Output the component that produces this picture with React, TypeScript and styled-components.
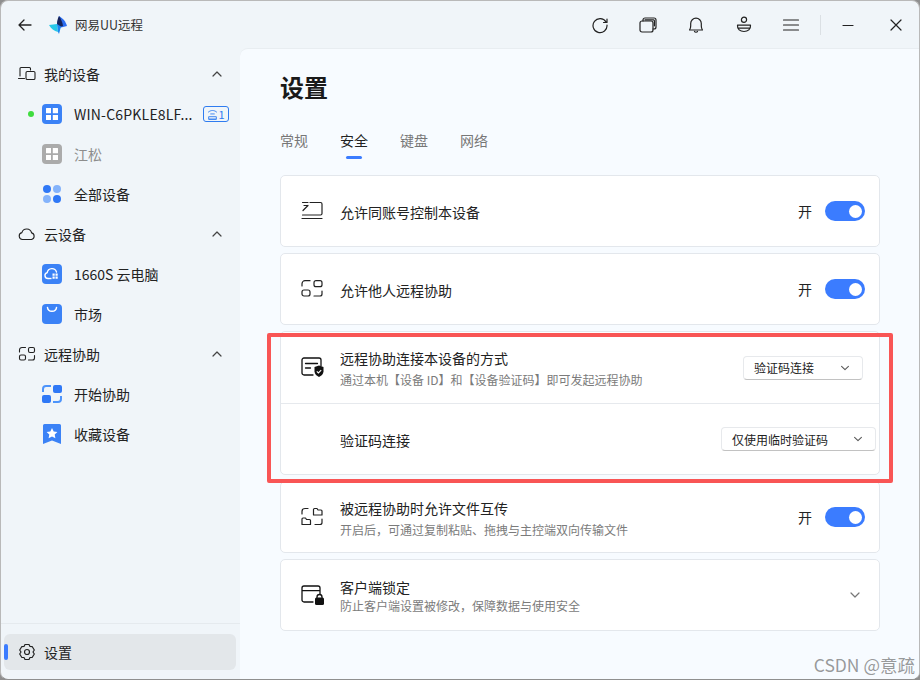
import React from 'react'
import styled, { createGlobalStyle } from 'styled-components'

const GlobalStyle = createGlobalStyle`
  html, body {
    margin: 0;
    padding: 0;
    width: 920px;
    height: 680px;
    overflow: hidden;
    background: #8f8f8f;
    font-family: "Noto Sans CJK SC", "Liberation Sans", sans-serif;
  }
  * { box-sizing: border-box; }
`

const Window = styled.div`
  position: relative;
  width: 920px;
  height: 680px;
  display: flex;
  flex-direction: column;
  background: #f0f5f9;
  border-radius: 8px;
  border: 1px solid #b9b9b9;
  border-bottom-color: #8f8f8f;
  overflow: hidden;
`
const TitleBar = styled.header`
  height: 47px;
  flex: none;
  display: flex;
  align-items: center;
  padding-left: 17px;
  color: #222;
`
const Brand = styled.span`
  margin-left: 8px;
  font-size: 12.5px;
  color: #333;
`
const LogoWrap = styled.span`
  margin-left: 17px;
  display: flex;
`
const ToolGroup = styled.div`
  margin-left: auto;
  display: flex;
  align-items: center;
`
const ToolButton = styled.span<{ $w?: number }>`
  width: ${(p) => p.$w ?? 48}px;
  height: 30px;
  display: flex;
  align-items: center;
  justify-content: center;
`
const ToolDivider = styled.span`
  width: 1px;
  height: 20px;
  margin: 0 2px 0 6px;
  background: #dbe0e4;
`
const Body = styled.div`
  flex: 1;
  display: flex;
  min-height: 0;
`
const Sidebar = styled.nav`
  width: 239px;
  flex: none;
  display: flex;
  flex-direction: column;
  padding-top: 6px;
`
const NavRow = styled.div`
  height: 40px;
  flex: none;
  display: flex;
  align-items: center;
  padding-left: 17px;
  font-size: 14px;
  color: #222;
`
const NavLabel = styled.span`
  margin-left: 8px;
  flex: 1;
`
const NavToggle = styled.span`
  width: 14px;
  margin-right: 16px;
  display: flex;
`
const ItemRow = styled.div<{ $muted?: boolean }>`
  height: 40px;
  flex: none;
  display: flex;
  align-items: center;
  padding-left: 41px;
  font-size: 14px;
  color: ${(p) => (p.$muted ? '#8d8d8d' : '#222')};
`
const ItemLabel = styled.span<{ $wide?: boolean }>`
  margin-left: 12px;
  letter-spacing: ${(p) => (p.$wide ? '0.2px' : '0')};
`
const OnlineDot = styled.span`
  position: absolute;
  left: 27px;
  width: 6px;
  height: 6px;
  border-radius: 50%;
  background: #3fdc3f;
`
const DeviceBadge = styled.span`
  margin-left: 10px;
  width: 26px;
  height: 16px;
  border: 1px solid #2f7cf0;
  border-radius: 3px;
  display: flex;
  align-items: center;
  justify-content: center;
  gap: 1px;
  font-size: 11px;
  line-height: 1;
  color: #2f7cf0;
`
const ItemWrap = styled.div`
  position: relative;
  display: flex;
  align-items: center;
`
const SideFooter = styled.div`
  margin-top: auto;
  border-top: 1px solid #e5eaee;
  padding: 10px 3px 9px;
`
const SettingsRow = styled.div`
  position: relative;
  height: 36px;
  display: flex;
  align-items: center;
  padding-left: 14px;
  border-radius: 6px;
  background: #e3e7ea;
  font-size: 14px;
  color: #222;
  width: 232px;
`
const ActiveMark = styled.span`
  position: absolute;
  left: 0;
  top: 10px;
  width: 4px;
  height: 16px;
  border-radius: 2px;
  background: #3b7cff;
`
const Main = styled.main`
  flex: 1;
  background: #f7fbff;
  border-top: 1px solid #e8edf1;
  border-top-left-radius: 8px;
  padding: 0 39px 0 40px;
  display: flex;
  flex-direction: column;
`
const Heading = styled.h1`
  margin: 20px 0 0;
  font-size: 24px;
  line-height: 36px;
  font-weight: 700;
  color: #1a1a1a;
`
const Tabs = styled.div`
  margin-top: 23px;
  display: flex;
  gap: 32px;
`
const Tab = styled.span<{ $active?: boolean }>`
  position: relative;
  font-size: 14px;
  line-height: 24px;
  color: ${(p) => (p.$active ? '#222' : '#777')};
  ${(p) =>
    p.$active &&
    `&::after {
      content: '';
      position: absolute;
      left: 6px;
      bottom: -7px;
      width: 16px;
      height: 3px;
      border-radius: 2px;
      background: #3b7cff;
    }`}
`
const CardList = styled.div`
  margin-top: 23px;
  display: flex;
  flex-direction: column;
  gap: 6px;
`
const Card = styled.section`
  background: #fff;
  border: 1px solid #e3e7ec;
  border-radius: 5px;
`
const Row = styled.div<{ $pr?: number; $divided?: boolean }>`
  height: ${(p) => (p.$divided ? 72 : 70)}px;
  display: flex;
  align-items: center;
  padding: 0 ${(p) => p.$pr ?? 14}px 0 19px;
  ${(p) => p.$divided && 'border-bottom: 1px solid #e6e9ed;'}
`
const RowIcon = styled.span`
  width: 24px;
  height: 24px;
  flex: none;
  display: flex;
  align-items: center;
  justify-content: center;
`
const RowText = styled.div<{ $indent?: boolean; $gap?: number }>`
  margin-left: ${(p) => (p.$indent ? 40 : 16)}px;
  padding-top: 2px;
  flex: 1;
  min-width: 0;
  display: flex;
  flex-direction: column;
  gap: ${(p) => p.$gap ?? 2}px;
`
const RowTitle = styled.div`
  font-size: 14px;
  line-height: 20px;
  color: #222;
`
const RowSub = styled.div`
  font-size: 12px;
  line-height: 18px;
  color: #7b7b7b;
`
const SwitchLabel = styled.span`
  font-size: 14px;
  color: #222;
  margin-right: 13px;
`
const Switch = styled.span`
  width: 40px;
  height: 20px;
  border-radius: 10px;
  background: #3b7cff;
  display: flex;
  align-items: center;
  justify-content: flex-end;
  padding-right: 3px;
  &::after {
    content: '';
    width: 13px;
    height: 13px;
    border-radius: 50%;
    background: #fff;
  }
`
const Select = styled.div<{ $w: number }>`
  width: ${(p) => p.$w}px;
  height: 24px;
  display: flex;
  align-items: center;
  justify-content: space-between;
  padding: 0 11px 0 10px;
  background: #fff;
  border: 1px solid #e7e9ec;
  border-bottom-color: #c2c2c2;
  border-radius: 4px;
  font-size: 12px;
  color: #222;
`
const ExpandMark = styled.span`
  margin-right: 3px;
  display: flex;
`
const RedFrame = styled.div`
  position: absolute;
  left: 266px;
  top: 332px;
  width: 626px;
  height: 150px;
  border: 4px solid #f95555;
  border-radius: 2px;
  pointer-events: none;
`
const Watermark = styled.div`
  position: absolute;
  right: 4px;
  bottom: 3px;
  font-size: 17.5px;
  line-height: 22px;
  color: rgba(110, 110, 110, 0.7);
`

const Chevron = ({ up, size = 14, color = '#444' }: { up?: boolean; size?: number; color?: string }) => (
  <svg width={size} height={size} viewBox="0 0 14 14" fill="none" stroke={color} strokeWidth="1.2" strokeLinecap="round" strokeLinejoin="round">
    <path d={up ? 'M3 9l4-4 4 4' : 'M3 5l4 4 4-4'} />
  </svg>
)

const Line = ({ size = 24, vb = 24, sw = 1.3, color = '#222', children }: { size?: number; vb?: number; sw?: number; color?: string; children: React.ReactNode }) => (
  <svg width={size} height={size} viewBox={`0 0 ${vb} ${vb}`} fill="none" stroke={color} strokeWidth={sw} strokeLinecap="round" strokeLinejoin="round">
    {children}
  </svg>
)

const Logo = () => (
  <svg width="18" height="18" viewBox="0 0 18 18">
    <path d="M0 9L8 8 9 16C5 15 2 12.500 0 9Z" fill="#27c8e8" />
    <path d="M10 0C14 2.500 16.500 5 18 10L10 12 8 8Z" fill="#2b6cf0" />
    <path d="M8 8L12 10.500 10 18 9 16Z" fill="#1a86f0" />
    <path d="M10 0C8.500 3 8 5.500 8 8L12 10.500 14 10C13.500 6 12 3 10 0Z" fill="#16235a" />
  </svg>
)

const SquareIcon = ({ color = '#3b82f6', children }: { color?: string; children: React.ReactNode }) => (
  <svg width="20" height="20" viewBox="0 0 20 20">
    <rect width="20" height="20" rx="4" fill={color} />
    {children}
  </svg>
)

const WinPanes = () => (
  <path d="M4 4.500a.5.5 0 0 1 .5-.5H9v5.200H4zM10.800 4h4.700a.5.5 0 0 1 .5.500v4.700h-5.200zM4 11h5v5H4.500a.5.5 0 0 1-.5-.5zM10.800 11H16v4.500a.5.5 0 0 1-.5.500h-4.700z" fill="#fff" />
)

const App = () => (
  <>
    <GlobalStyle />
    <Window>
      <TitleBar>
        <Line size={14} vb={14} sw={1.3}>
          <path d="M13 7H1M6 2L1 7l5 5" />
        </Line>
        <LogoWrap>
          <Logo />
        </LogoWrap>
        <Brand>网易UU远程</Brand>
        <ToolGroup>
          <ToolButton>
            <Line size={18} vb={18} sw={1.2}>
              <path d="M15 6A7 7 0 1 0 16 9M16 3v3.500h-3.500" />
            </Line>
          </ToolButton>
          <ToolButton>
            <Line size={18} vb={18} sw={1.2}>
              <rect x="1" y="5" width="13" height="11" rx="2" />
              <path d="M4 5V4a2 2 0 0 1 2-2h9a2 2 0 0 1 2 2v7a2 2 0 0 1-2 2h-1M6 3.800h8.500a1 1 0 0 1 .9 1v5" />
            </Line>
          </ToolButton>
          <ToolButton>
            <Line size={18} vb={18} sw={1.2}>
              <path d="M2.500 14h13c-.8-1-1.200-2-1.200-4V7.500a5.300 5.300 0 0 0-10.600 0V10c0 2-.4 3-1.200 4zM7.500 15.500c.5 1 2.500 1 3 0" />
            </Line>
          </ToolButton>
          <ToolButton>
            <Line size={18} vb={18} sw={1.2}>
              <circle cx="9" cy="3.800" r="2.600" />
              <path d="M2.500 9.200h13c.3 4-2.500 6.300-6.500 6.300S2.200 13.200 2.500 9.200zM3 12.200h12" />
            </Line>
          </ToolButton>
          <ToolButton $w={46}>
            <Line size={18} vb={18} sw={1.2}>
              <path d="M1.500 4h15M1.500 9h15M1.500 14h15" />
            </Line>
          </ToolButton>
          <ToolDivider />
          <ToolButton $w={50}>
            <Line size={12} vb={12} sw={1.2}>
              <path d="M1 6.500h10" />
            </Line>
          </ToolButton>
          <ToolButton $w={46}>
            <Line size={12} vb={12} sw={1.2}>
              <path d="M1 1l10 10M11 1L1 11" />
            </Line>
          </ToolButton>
        </ToolGroup>
      </TitleBar>
      <Body>
        <Sidebar>
          <NavRow>
            <Line size={18} vb={18} sw={1.1}>
              <path d="M2 11V3.500a1 1 0 0 1 1-1h8.500a1 1 0 0 1 1 1V5M.5 13.500h6" />
              <rect x="8" y="6.500" width="9" height="8" rx="1.300" />
            </Line>
            <NavLabel>我的设备</NavLabel>
            <NavToggle>
              <Chevron up />
            </NavToggle>
          </NavRow>
          <ItemWrap>
            <OnlineDot />
            <ItemRow>
              <SquareIcon color="#3b82f6">
                <WinPanes />
              </SquareIcon>
              <ItemLabel $wide>WIN-C6PKLE8LF...</ItemLabel>
              <DeviceBadge>
                <svg width="11" height="11" viewBox="0 0 10 10" fill="none" stroke="#2f7cf0" strokeWidth="0.800">
                  <path d="M1 3C3.500.8 6.500.8 9 3M3 4.500h4M1.500 9.300V7h7v2.300zM1.500 9.300h7" />
                </svg>
                1
              </DeviceBadge>
            </ItemRow>
          </ItemWrap>
          <ItemRow $muted>
            <SquareIcon color="#ababab">
              <WinPanes />
            </SquareIcon>
            <ItemLabel>江松</ItemLabel>
          </ItemRow>
          <ItemRow>
            <svg width="20" height="20" viewBox="0 0 20 20">
              <circle cx="5" cy="5" r="4" fill="#2f78f6" />
              <circle cx="15" cy="5" r="4" fill="#84b3fb" />
              <circle cx="5" cy="15" r="4" fill="#84b3fb" />
              <circle cx="15" cy="15" r="4" fill="#2f78f6" />
            </svg>
            <ItemLabel>全部设备</ItemLabel>
          </ItemRow>
          <NavRow>
            <Line size={18} vb={18} sw={1.1}>
              <path d="M4.500 14.500a3.500 3.500 0 0 1-.6-6.900 5 5 0 0 1 9.700.3 3.400 3.400 0 0 1-.1 6.600z" />
            </Line>
            <NavLabel>云设备</NavLabel>
            <NavToggle>
              <Chevron up />
            </NavToggle>
          </NavRow>
          <ItemRow>
            <SquareIcon color="#3b82f6">
              <path d="M6 14.500a3 3 0 0 1-.8-5.900 4.800 4.800 0 0 1 9.300-.6" fill="none" stroke="#fff" strokeWidth="1.400" strokeLinecap="round" />
              <path d="M6 14.500h3.500" fill="none" stroke="#fff" strokeWidth="1.400" />
              <path d="M10.500 9.500h2.200v2.200h-2.200zM13.500 9.500h2.200v2.200h-2.200zM10.500 12.500h2.200v2.200h-2.200zM13.500 12.500h2.200v2.200h-2.200z" fill="#fff" />
            </SquareIcon>
            <ItemLabel>1660S 云电脑</ItemLabel>
          </ItemRow>
          <ItemRow>
            <SquareIcon color="#3b82f6">
              <path d="M5.500 3.500c.5 5 8.500 5 9 0" fill="none" stroke="#fff" strokeWidth="1.500" strokeLinecap="round" />
            </SquareIcon>
            <ItemLabel>市场</ItemLabel>
          </ItemRow>
          <NavRow>
            <Line size={18} vb={18} sw={1.1}>
              <rect x="1.500" y="10" width="6" height="5" rx="1.500" />
              <rect x="10.500" y="2.500" width="6" height="5" rx="1.500" />
              <path d="M7.500 2.500H4a2.500 2.500 0 0 0-2.500 2.500v2M10.500 15h4a2 2 0 0 0 2-2v-2.500" />
            </Line>
            <NavLabel>远程协助</NavLabel>
            <NavToggle>
              <Chevron up />
            </NavToggle>
          </NavRow>
          <ItemRow>
            <svg width="20" height="20" viewBox="0 0 20 20" fill="none">
              <rect x="11" y="1" width="9" height="8" rx="2" fill="#2f78f6" />
              <rect x="0" y="11" width="9" height="8" rx="2" fill="#2f78f6" />
              <path d="M9 2H4a3 3 0 0 0-3 3v3M11 18h5a3 3 0 0 0 3-3v-3" stroke="#4d94fb" strokeWidth="2" />
            </svg>
            <ItemLabel>开始协助</ItemLabel>
          </ItemRow>
          <ItemRow>
            <svg width="20" height="20" viewBox="0 0 20 20">
              <path d="M1 1.500A1.500 1.500 0 0 1 2.500 0h15A1.500 1.500 0 0 1 19 1.500V20l-9-3.500L1 20z" fill="#3b82f6" />
              <path d="M10 4l1.700 3.400 3.700.5-2.700 2.600.7 3.700-3.400-1.800-3.400 1.800.7-3.700-2.700-2.600 3.700-.5z" fill="#fff" />
            </svg>
            <ItemLabel>收藏设备</ItemLabel>
          </ItemRow>
          <SideFooter>
            <SettingsRow>
              <ActiveMark />
              <Line size={18} vb={18} sw={1.2}>
                <path d="M7 1.500h4l1 2 2.300.2L16.300 7 15 9l1.300 2-2 3.300-2.300.2-1 2H7l-1-2-2.300-.2L1.700 11 3 9 1.700 7l2-3.300L6 3.500z" />
                <circle cx="9" cy="9" r="2.500" />
              </Line>
              <NavLabel>设置</NavLabel>
            </SettingsRow>
          </SideFooter>
        </Sidebar>
        <Main>
          <Heading>设置</Heading>
          <Tabs>
            <Tab>常规</Tab>
            <Tab $active>安全</Tab>
            <Tab>键盘</Tab>
            <Tab>网络</Tab>
          </Tabs>
          <CardList>
            <Card>
              <Row>
                <RowIcon>
                  <Line sw={1.2}>
                    <path d="M10 3.500h10.500a1.500 1.500 0 0 1 1.500 1.500v9.500a1.500 1.500 0 0 1-1.500 1.500H2.500M2.500 3.500H8M4 6.500h4M8 6.500L3 11.500M2 19.500h20" />
                  </Line>
                </RowIcon>
                <RowText>
                  <RowTitle>允许同账号控制本设备</RowTitle>
                </RowText>
                <SwitchLabel>开</SwitchLabel>
                <Switch />
              </Row>
            </Card>
            <Card>
              <Row>
                <RowIcon>
                  <Line sw={1.2}>
                    <rect x="2" y="13" width="8" height="6" rx="2" />
                    <rect x="14" y="3.700" width="8" height="6" rx="2" />
                    <path d="M10 3.700H5a3 3 0 0 0-3 3V9M14 19h6a2 2 0 0 0 2-2v-3" />
                  </Line>
                </RowIcon>
                <RowText>
                  <RowTitle>允许他人远程协助</RowTitle>
                </RowText>
                <SwitchLabel>开</SwitchLabel>
                <Switch />
              </Row>
            </Card>
            <Card>
              <Row $divided $pr={16}>
                <RowIcon>
                  <svg width="24" height="24" viewBox="0 0 24 24" fill="none">
                    <path d="M13 19H4a2 2 0 0 1-2-2V4a2 2 0 0 1 2-2h15a2 2 0 0 1 2 2v6M5.500 7.500h12M5.500 12h5" stroke="#111" strokeWidth="1.300" strokeLinecap="round" />
                    <path d="M19 9.500l4.500 1.500v4.500c0 2.700-2.500 4.500-4.500 5.500-2-1-4.500-2.800-4.500-5.500V11z" fill="#111" />
                    <path d="M16.800 15.300l1.600 1.600 2.800-2.800" stroke="#fff" strokeWidth="1.100" />
                  </svg>
                </RowIcon>
                <RowText $gap={3}>
                  <RowTitle>远程协助连接本设备的方式</RowTitle>
                  <RowSub>通过本机【设备 ID】和【设备验证码】即可发起远程协助</RowSub>
                </RowText>
                <Select $w={120}>
                  验证码连接
                  <Chevron color="#555" size={12} />
                </Select>
              </Row>
              <Row $pr={3}>
                <RowText $indent>
                  <RowTitle>验证码连接</RowTitle>
                </RowText>
                <Select $w={155}>
                  仅使用临时验证码
                  <Chevron color="#555" size={12} />
                </Select>
              </Row>
            </Card>
            <Card>
              <Row>
                <RowIcon>
                  <Line sw={1.2}>
                    <path d="M8 3.500H5a3 3 0 0 0-3 3V9M15 19.500h5a2 2 0 0 0 2-2V14" />
                    <path d="M13.500 10V4.500a1 1 0 0 1 1-1H17l1 1.500h3a1 1 0 0 1 1 1V10zM2 19.500V14a1 1 0 0 1 1-1h2.500l1 1.500H9.500a1 1 0 0 1 1 1v4z" />
                  </Line>
                </RowIcon>
                <RowText $gap={3}>
                  <RowTitle>被远程协助时允许文件互传</RowTitle>
                  <RowSub>开启后，可通过复制粘贴、拖拽与主控端双向传输文件</RowSub>
                </RowText>
                <SwitchLabel>开</SwitchLabel>
                <Switch />
              </Row>
            </Card>
            <Card>
              <Row>
                <RowIcon>
                  <svg width="24" height="24" viewBox="0 0 24 24" fill="none">
                    <path d="M13 19H4a2 2 0 0 1-2-2V5a2 2 0 0 1 2-2h14a2 2 0 0 1 2 2v6M2 7.700h18" stroke="#111" strokeWidth="1.300" strokeLinecap="round" />
                    <rect x="15" y="14.500" width="9" height="7.500" rx="1.500" fill="#111" />
                    <path d="M17 15v-1a2.500 2.500 0 0 1 5 0v1" stroke="#111" strokeWidth="1.300" />
                  </svg>
                </RowIcon>
                <RowText $gap={0}>
                  <RowTitle>客户端锁定</RowTitle>
                  <RowSub>防止客户端设置被修改，保障数据与使用安全</RowSub>
                </RowText>
                <ExpandMark>
                  <Chevron color="#777" size={14} />
                </ExpandMark>
              </Row>
            </Card>
          </CardList>
        </Main>
      </Body>
      <RedFrame />
      <Watermark>CSDN @意疏</Watermark>
    </Window>
  </>
)

export default App
